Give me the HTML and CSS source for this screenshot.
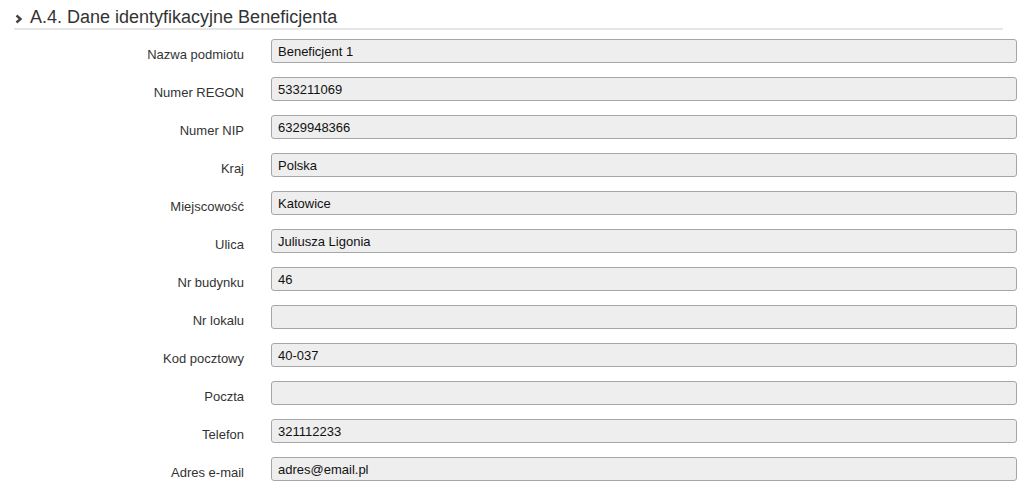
FILE: index.html
```html
<!DOCTYPE html>
<html>
<head>
  <meta charset="utf-8">
  <title>A.4. Dane identyfikacyjne Beneficjenta</title>
  <link rel="stylesheet" href="styles.css">
</head>
<body>
  <div class="section">
    <h3 class="section-title">
      <svg class="chevron" width="8" height="10" viewBox="0 0 8 10"><path d="M1.5 1.5 L5.5 5 L1.5 8.5" fill="none" stroke="#444" stroke-width="2.4"/></svg>
      A.4. Dane identyfikacyjne Beneficjenta
    </h3>
    <form class="form">
      <label class="form-label">Nazwa podmiotu</label>
      <input class="form-input" type="text" value="Beneficjent 1" readonly>
      <label class="form-label">Numer REGON</label>
      <input class="form-input" type="text" value="533211069" readonly>
      <label class="form-label">Numer NIP</label>
      <input class="form-input" type="text" value="6329948366" readonly>
      <label class="form-label">Kraj</label>
      <input class="form-input" type="text" value="Polska" readonly>
      <label class="form-label">Miejscowość</label>
      <input class="form-input" type="text" value="Katowice" readonly>
      <label class="form-label">Ulica</label>
      <input class="form-input" type="text" value="Juliusza Ligonia" readonly>
      <label class="form-label">Nr budynku</label>
      <input class="form-input" type="text" value="46" readonly>
      <label class="form-label">Nr lokalu</label>
      <input class="form-input" type="text" value="" readonly>
      <label class="form-label">Kod pocztowy</label>
      <input class="form-input" type="text" value="40-037" readonly>
      <label class="form-label">Poczta</label>
      <input class="form-input" type="text" value="" readonly>
      <label class="form-label">Telefon</label>
      <input class="form-input" type="text" value="321112233" readonly>
      <label class="form-label">Adres e-mail</label>
      <input class="form-input" type="text" value="adres@email.pl" readonly>
    </form>
  </div>
</body>
</html>
```

FILE: styles.css
```css
html, body {
  margin: 0;
  padding: 0;
  background: #fff;
  color: #333;
  font-family: "Liberation Sans", Arial, sans-serif;
}
.section {
  padding: 7px 6px 0 14px;
}
.section-title {
  margin: 0 14px 0 0;
  padding: 0 0 1px 1px;
  font-size: 18px;
  font-weight: normal;
  line-height: 20px;
  color: #333;
  border-bottom: 2px solid #e6e6e6;
  display: flex;
  align-items: center;
}
.chevron {
  margin: 3px 7px 0 0;
}
.form {
  display: grid;
  grid-template-columns: 230px 1fr;
  column-gap: 27px;
  row-gap: 14px;
  margin-top: 9px;
}
.form-label {
  text-align: right;
  font-size: 13px;
  padding-top: 8px;
  color: #333;
}
.form-input {
  height: 24px;
  box-sizing: border-box;
  margin: 0;
  padding: 0 6px;
  font-family: "Liberation Sans", Arial, sans-serif;
  font-size: 13px;
  color: #111;
  background: #eee;
  border: 1px solid #a6a6a6;
  border-radius: 3px;
  outline: none;
}
```
